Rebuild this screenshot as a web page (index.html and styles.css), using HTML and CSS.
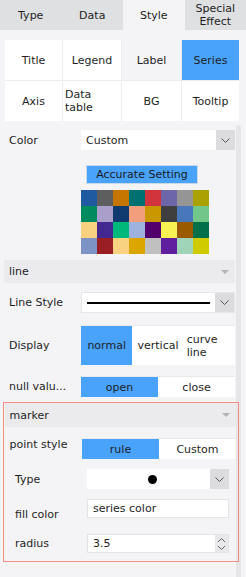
FILE: index.html
```html
<!DOCTYPE html>
<html lang="en">
<head>
    <meta charset="UTF-8">
    <meta name="viewport" content="width=device-width, initial-scale=1.0">
    <title>Series style</title>
    <link rel="stylesheet" href="styles.css">
</head>
<body>
    <div class="scrollbar"></div>

    <div class="tabs">
        <div class="tab">Type</div>
        <div class="tab">Data</div>
        <div class="tab active">Style</div>
        <div class="tab">Special Effect</div>
    </div>

    <div class="panel">
        <div class="subtabs">
            <div class="subtab">Title</div>
            <div class="subtab">Legend</div>
            <div class="subtab hover">Label</div>
            <div class="subtab selected">Series</div>
            <div class="subtab">Axis</div>
            <div class="subtab">Data table</div>
            <div class="subtab">BG</div>
            <div class="subtab">Tooltip</div>
        </div>

        <div class="row row-color">
            <span class="label">Color</span>
            <div class="select">
                <span class="select-value">Custom</span>
                <span class="select-arrow"><svg width="9" height="5" viewBox="0 0 9 5"><path d="M0.5 0.5 L4.5 4.5 L8.5 0.5" fill="none" stroke="#555" stroke-width="1"/></svg></span>
            </div>
        </div>

        <button class="accurate">Accurate Setting</button>

        <div class="palette">
            <span class="swatch" style="background:#1f5aa0"></span>
            <span class="swatch" style="background:#5e5e5e"></span>
            <span class="swatch" style="background:#c47600"></span>
            <span class="swatch" style="background:#007070"></span>
            <span class="swatch" style="background:#d1343c"></span>
            <span class="swatch" style="background:#6d66a9"></span>
            <span class="swatch" style="background:#959595"></span>
            <span class="swatch" style="background:#a9a200"></span>
            <span class="swatch" style="background:#008a5e"></span>
            <span class="swatch" style="background:#aa9ecb"></span>
            <span class="swatch" style="background:#0e3a70"></span>
            <span class="swatch" style="background:#f29e7c"></span>
            <span class="swatch" style="background:#c99800"></span>
            <span class="swatch" style="background:#3f3f3f"></span>
            <span class="swatch" style="background:#4878bb"></span>
            <span class="swatch" style="background:#71c78a"></span>
            <span class="swatch" style="background:#f8d280"></span>
            <span class="swatch" style="background:#42288f"></span>
            <span class="swatch" style="background:#00b87a"></span>
            <span class="swatch" style="background:#9db3dd"></span>
            <span class="swatch" style="background:#52006b"></span>
            <span class="swatch" style="background:#f8f352"></span>
            <span class="swatch" style="background:#9a5a00"></span>
            <span class="swatch" style="background:#00704a"></span>
            <span class="swatch" style="background:#7d93c6"></span>
            <span class="swatch" style="background:#9a1f25"></span>
            <span class="swatch" style="background:#f8d280"></span>
            <span class="swatch" style="background:#dca600"></span>
            <span class="swatch" style="background:#c0c0c0"></span>
            <span class="swatch" style="background:#5f1f9e"></span>
            <span class="swatch" style="background:#9fd4b9"></span>
            <span class="swatch" style="background:#cfcb00"></span>
        </div>

        <div class="section-head">
            <span>line</span>
            <span class="caret"></span>
        </div>

        <div class="row row-linestyle">
            <span class="label">Line Style</span>
            <div class="select select-tall">
                <span class="select-value"><span class="line-sample"></span></span>
                <span class="select-arrow"><svg width="9" height="5" viewBox="0 0 9 5"><path d="M0.5 0.5 L4.5 4.5 L8.5 0.5" fill="none" stroke="#555" stroke-width="1"/></svg></span>
            </div>
        </div>

        <div class="row row-display">
            <span class="label">Display</span>
            <div class="segmented segmented-tall">
                <span class="segment on">normal</span>
                <span class="segment">vertical</span>
                <span class="segment">curve line</span>
            </div>
        </div>

        <div class="row row-null">
            <span class="label">null valu...</span>
            <div class="segmented">
                <span class="segment on">open</span>
                <span class="segment">close</span>
            </div>
        </div>

        <div class="marker">
            <div class="section-head">
                <span>marker</span>
                <span class="caret"></span>
            </div>

            <div class="row row-point">
                <span class="label label-raised">point style</span>
                <div class="segmented">
                    <span class="segment on">rule</span>
                    <span class="segment">Custom</span>
                </div>
            </div>

            <div class="row row-type">
                <span class="label label-sub">Type</span>
                <div class="select select-sub">
                    <span class="select-value center"><span class="dot"></span></span>
                    <span class="select-arrow"><svg width="9" height="5" viewBox="0 0 9 5"><path d="M0.5 0.5 L4.5 4.5 L8.5 0.5" fill="none" stroke="#555" stroke-width="1"/></svg></span>
                </div>
            </div>

            <div class="row row-fill">
                <span class="label label-sub label-low">fill color</span>
                <div class="input select-sub">series color</div>
            </div>

            <div class="row row-radius">
                <span class="label label-sub">radius</span>
                <div class="input select-sub spin-input">
                    <span class="spin-value">3.5</span>
                    <span class="spinner">
                        <svg width="9" height="16" viewBox="0 0 9 16"><path d="M1 6 L4.5 2.5 L8 6" fill="none" stroke="#666" stroke-width="1"/><path d="M1 10 L4.5 13.5 L8 10" fill="none" stroke="#666" stroke-width="1"/></svg>
                    </span>
                </div>
            </div>
        </div>
    </div>
</body>
</html>
```

FILE: styles.css
```css
body {
    margin: 0;
    width: 246px;
    height: 577px;
    background-color: #f4f4f6;
    font-family: "DejaVu Sans", Verdana, sans-serif;
    font-size: 11px;
    color: #1e1e1e;
    overflow: hidden;
    position: relative;
}
.tabs {
    display: flex;
    height: 30px;
    background-color: #dfe0e2;
}
.tab {
    flex: 1;
    display: flex;
    align-items: center;
    justify-content: center;
    text-align: center;
    line-height: 13px;
    padding: 0 4px;
}
.tab.active {
    background-color: #f4f4f6;
}
.panel {
    position: relative;
    padding: 10px 11px 0 4px;
}
.subtabs {
    display: grid;
    grid-template-columns: 57px 58px 59px 57px;
    grid-template-rows: 40px 40px;
    gap: 1px;
    margin-left: 1px;
    background-color: #ededef;
    width: 234px;
}
.subtab {
    display: flex;
    align-items: center;
    justify-content: center;
    background-color: #fff;
    padding: 0 2px;
    line-height: 13px;
}
.subtab.hover {
    background-color: #f4f4f6;
}
.subtab.selected {
    background-color: #4aa3fa;
}
.row {
    display: flex;
    align-items: center;
}
.label {
    width: 72px;
    padding-left: 5px;
    flex-shrink: 0;
}
.select {
    display: flex;
    width: 154px;
    height: 20px;
    background-color: #fff;
    box-sizing: border-box;
}
.select-tall {
    height: 21px;
    border: 1px solid #e6e6e8;
}
.select-value {
    flex: 1;
    display: flex;
    align-items: center;
    padding-left: 5px;
}
.select-value.center {
    justify-content: center;
    padding-left: 0;
}
.select-arrow {
    width: 19px;
    display: flex;
    align-items: center;
    justify-content: center;
    background-color: #dcdcde;
}
.row-color {
    margin-top: 9px;
}
.accurate {
    display: block;
    margin: 15px 0 0 82px;
    width: 112px;
    height: 19px;
    padding: 0;
    border: 1px solid #c9d9ea;
    background-color: #4aa3fa;
    font-family: inherit;
    font-size: 11px;
    color: #1a1a1a;
}
.palette {
    display: grid;
    grid-template-columns: repeat(8, 16px);
    grid-auto-rows: 16px;
    margin: 6px 0 0 77px;
}
.swatch {
    display: block;
}
.section-head {
    display: flex;
    align-items: center;
    justify-content: space-between;
    height: 23px;
    margin-top: 6px;
    padding: 0 6px 0 5px;
    background-color: #ebebed;
}
.caret {
    width: 0;
    height: 0;
    border-left: 4px solid transparent;
    border-right: 4px solid transparent;
    border-top: 4px solid #b4b4b6;
}
.row-linestyle {
    margin-top: 9px;
}
.line-sample {
    display: block;
    width: 123px;
    height: 2px;
    background-color: #000;
}
.segmented {
    display: flex;
    width: 154px;
    height: 21px;
    background-color: #fff;
    border-top: 1px solid #e9e9eb;
    box-sizing: border-box;
}
.segmented-tall {
    height: 40px;
}
.segment {
    flex: 1;
    display: flex;
    align-items: center;
    justify-content: center;
    padding: 0 3px;
    line-height: 13px;
}
.segment.on {
    background-color: #4aa3fa;
}
.row-display {
    margin-top: 12px;
}
.row-null {
    margin-top: 11px;
}
.marker {
    margin: 5px -4px 0 -1px;
    border: 1.5px solid #f48e80;
    padding: 0 2px 0 0;
    height: 158px;
}
.marker .section-head {
    margin-top: 0;
    margin-left: 0.5px;
    height: 24px;
}
.row-point {
    margin-top: 11px;
}
.row-point .label {
    width: 72.5px;
    padding-left: 5.5px;
}
.label-raised {
    position: relative;
    top: -4px;
}
.label-sub {
    width: 72px;
    padding-left: 11px;
}
.select-sub {
    width: 142px;
}
.row-type {
    margin-top: 10px;
}
.row-type .select {
    height: 20px;
}
.dot {
    display: block;
    width: 9px;
    height: 9px;
    border-radius: 50%;
    background-color: #000;
    margin-left: 8px;
}
.input {
    height: 19px;
    display: flex;
    align-items: center;
    padding-left: 5px;
    background-color: #fff;
    border: 1px solid #e4e4e6;
    box-sizing: border-box;
}
.row-fill {
    margin-top: 10px;
    align-items: flex-start;
}
.label-low {
    padding-top: 9px;
}
.row-radius {
    margin-top: 13px;
}
.spin-input {
    padding-right: 0;
}
.spin-value {
    flex: 1;
}
.spinner {
    width: 13px;
    height: 100%;
    display: flex;
    align-items: center;
    justify-content: center;
    background-color: #e8e8ea;
}
.scrollbar {
    position: absolute;
    left: 236px;
    top: 125px;
    width: 5px;
    height: 452px;
    border-radius: 3px 3px 0 0;
    background-color: #e6e6e8;
}
```
